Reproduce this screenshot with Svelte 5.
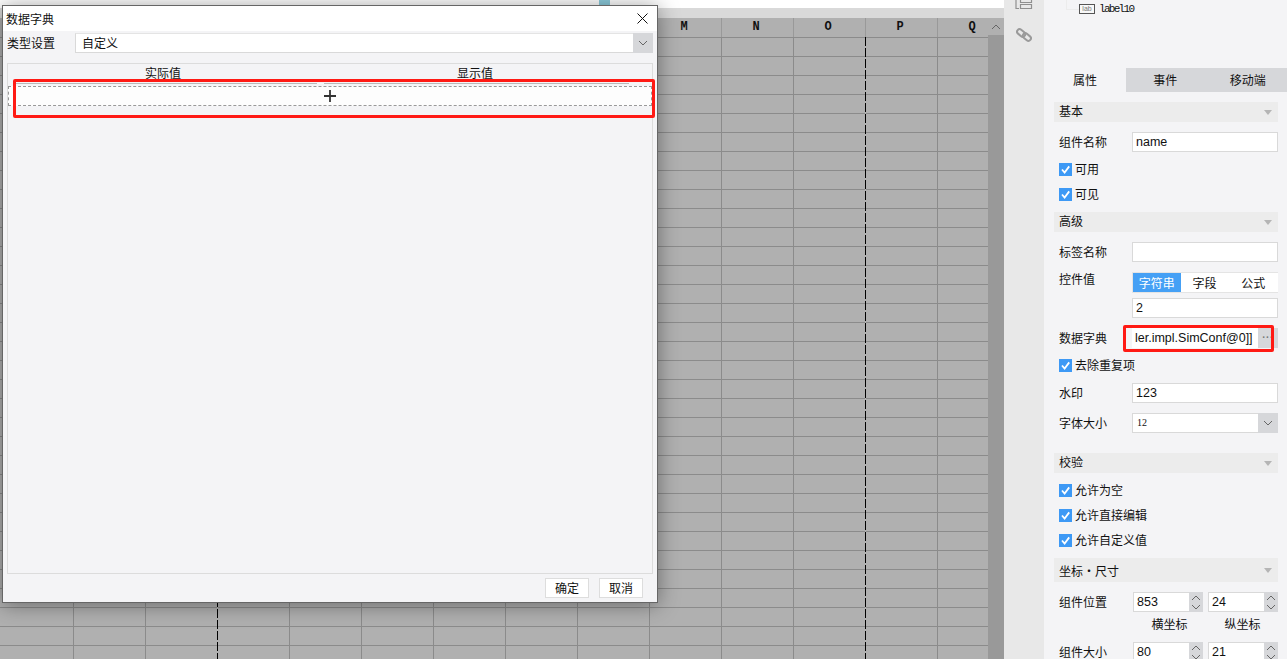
<script>
  const cols = [
    { w: 74 }, { w: 72 }, { w: 72, dash: true }, { w: 72 }, { w: 72 }, { w: 72 }, { w: 72 }, { w: 72 }, { w: 72, label: 'L' },
    { w: 72, label: 'M' }, { w: 72, label: 'N' }, { w: 72, label: 'O', dash: true }, { w: 72, label: 'P' }, { w: 72, label: 'Q' }
  ];
</script>

{#snippet chevron(up = false)}
  <svg class="chev" class:up viewBox="0 0 10 6" width="10" height="6"><path d="M1 1l4 4 4-4" fill="none" stroke="#666" stroke-width="1" /></svg>
{/snippet}

{#snippet sectionHead(title, tall = false)}
  <div class="sec-head" class:tall>
    <span class="sec-title">{title}</span>
    <svg viewBox="0 0 8 5" width="8" height="5"><path d="M0 0h8L4 5z" fill="#b5b5b5" /></svg>
  </div>
{/snippet}

{#snippet check(text)}
  <label class="check">
    <span class="box"><svg viewBox="0 0 13 13" width="13" height="13"><path d="M3 6.5l2.6 3L10.2 3.4" fill="none" stroke="#fff" stroke-width="1.8" /></svg></span>
    <span class="check-text">{text}</span>
  </label>
{/snippet}

{#snippet spin(value)}
  <div class="spin">
    <span class="spin-value">{value}</span>
    <span class="spin-btn">{@render chevron(true)}{@render chevron()}</span>
  </div>
{/snippet}

<div class="screen">
  <main class="work">
    <div class="top-white"><span class="blue-tab"></span></div>
    <div class="top-strip"></div>
    <div class="sheet-wrap">
      <div class="sheet">
        <div class="sheet-head">
          {#each cols as c}
            <div class="head-cell" style="width:{c.w}px">{c.label ?? ''}</div>
          {/each}
        </div>
        <div class="sheet-body">
          {#each cols as c}
            <div class="col" class:dash={c.dash} style="width:{c.w}px"></div>
          {/each}
        </div>
      </div>
      <div class="scrollbar">
        <div class="scroll-up">{@render chevron(true)}</div>
      </div>
    </div>
  </main>

  <nav class="strip">
    <svg class="list-icon" viewBox="0 0 18 10" width="18" height="10"><path d="M1 0v8.5h3M5.5 0v2.5h11V0M5.5 4.5h11v4h-11z" fill="none" stroke="#8f8f8f" stroke-width="1.2" /></svg>
    <svg class="link-icon" viewBox="0 0 16 16" width="16" height="16"><g fill="none" stroke="#9a9a9a" stroke-width="2"><rect x="0.6" y="3.4" width="9" height="5" rx="2.5" transform="rotate(40 5 6)" /><rect x="6.4" y="7.6" width="9" height="5" rx="2.5" transform="rotate(40 11 10)" /></g></svg>
  </nav>

  <aside class="panel">
    <div class="tree">
      <span class="tree-line"></span>
      <span class="lab-icon">lab</span>
      <span class="tree-text">label10</span>
    </div>
    <div class="tabs">
      <span class="tab on">属性</span>
      <span class="tab">事件</span>
      <span class="tab last">移动端</span>
    </div>
    <div class="form">
      <div class="g10">{@render sectionHead('基本')}</div>
      <div class="row g10"><span class="lbl">组件名称</span><span class="field latin">name</span></div>
      <div class="g5">{@render check('可用')}{@render check('可见')}</div>

      <div class="g5">{@render sectionHead('高级')}</div>
      <div class="row g10"><span class="lbl">标签名称</span><span class="field"></span></div>
      <div class="row seg-row g10">
        <span class="lbl seg-lbl">控件值</span>
        <div class="seg"><span class="seg-item on">字符串</span><span class="seg-item">字段</span><span class="seg-item">公式</span></div>
      </div>
      <div class="row g5"><span class="lbl"></span><span class="field latin">2</span></div>
      <div class="row g10">
        <span class="lbl">数据字典</span>
        <div class="combo">
          <span class="combo-text latin clip">ler.impl.SimConf@0]]</span>
          <span class="combo-btn dots">···</span>
        </div>
      </div>
      <div class="g5">{@render check('去除重复项')}</div>
      <div class="row g5"><span class="lbl">水印</span><span class="field latin">123</span></div>
      <div class="row g10">
        <span class="lbl">字体大小</span>
        <div class="combo"><span class="combo-text small">12</span><span class="combo-btn">{@render chevron()}</span></div>
      </div>

      <div class="g20">{@render sectionHead('校验')}</div>
      <div class="g5">{@render check('允许为空')}{@render check('允许直接编辑')}{@render check('允许自定义值')}</div>

      <div class="g5">{@render sectionHead('坐标・尺寸', true)}</div>
      <div class="row g10"><span class="lbl">组件位置</span>{@render spin('853')}{@render spin('24')}</div>
      <div class="row caption"><span class="lbl"></span><span class="cap">横坐标</span><span class="cap">纵坐标</span></div>
      <div class="row g6"><span class="lbl">组件大小</span>{@render spin('80')}{@render spin('21')}</div>
    </div>
  </aside>

  <div class="dialog">
    <header class="dlg-title">
      <span>数据字典</span>
      <svg viewBox="0 0 11 11" width="11" height="11"><path d="M0.5 0.5l10 10M10.5 0.5l-10 10" stroke="#111" stroke-width="1" fill="none" /></svg>
    </header>
    <div class="dlg-type">
      <span class="dlg-lbl">类型设置</span>
      <div class="dlg-combo"><span>自定义</span><span class="dlg-arrow">{@render chevron()}</span></div>
    </div>
    <section class="dict">
      <div class="dict-head"><span>实际值</span><span>显示值</span></div>
      <div class="dict-lines"><i></i><i></i></div>
      <div class="dict-add">
        <svg viewBox="0 0 12 12" width="12" height="12"><path d="M6 0v12M0 6h12" stroke="#333" stroke-width="1.8" /></svg>
      </div>
    </section>
    <footer class="dlg-foot"><span class="btn">确定</span><span class="btn">取消</span></footer>
  </div>

  <div class="mark mark-a"></div>
  <div class="mark mark-b"></div>
</div>

<style>
  :global(body) { margin: 0; background: #fff; }
  .screen {
    position: relative;
    display: flex;
    width: 1287px;
    height: 659px;
    overflow: hidden;
    font: 12px/1 "Noto Sans CJK SC", sans-serif;
    color: #111;
  }
  .latin { font-family: "Liberation Sans", "Noto Sans CJK SC", sans-serif; font-size: 12.5px; }

  .work { width: 1004px; display: flex; flex-direction: column; flex: none; }
  .top-white { height: 8px; background: #fff; position: relative; }
  .blue-tab { position: absolute; left: 599px; top: 0; width: 11px; height: 8px; background: #8ccbdc; }
  .top-strip { height: 10px; background: #d9d9d9; }
  .sheet-wrap { flex: 1; display: flex; min-height: 0; }
  .sheet { flex: 1; min-width: 0; display: flex; flex-direction: column; overflow: hidden; background: #b0b0b0; }
  .sheet-head { display: flex; height: 19px; flex: none; }
  .head-cell {
    flex: none;
    box-sizing: border-box;
    border-right: 1px solid #999;
    text-align: center;
    font: bold 12px/19px "Liberation Mono", monospace;
    color: #111;
    padding-right: 3px;
  }
  .sheet-body {
    flex: 1;
    display: flex;
    background: repeating-linear-gradient(to bottom, #8b8b8b 0 1px, transparent 1px 19px);
  }
  .col { flex: none; box-sizing: border-box; border-right: 1px solid #8b8b8b; position: relative; }
  .col.dash { border-right-color: transparent; }
  .col.dash::after {
    content: "";
    position: absolute;
    top: 0; bottom: 0; right: -1px;
    width: 1px;
    background: repeating-linear-gradient(to bottom, #000 0 9px, #b0b0b0 9px 11px);
  }
  .scrollbar { width: 16px; flex: none; background: #999; }
  .scroll-up { height: 17px; background: #b0b0b0; display: flex; align-items: center; justify-content: center; }

  .chev { display: block; }
  .chev.up { transform: scaleY(-1); }

  .strip { width: 40px; flex: none; background: #e8e8e8; position: relative; }
  .list-icon { position: absolute; left: 11px; top: 0; }
  .link-icon { position: absolute; left: 12px; top: 27px; }

  .panel { flex: 1; min-width: 0; background: #f4f4f6; }
  .tree { height: 68px; position: relative; box-sizing: border-box; }
  .tree-line { position: absolute; left: 22px; top: -1px; width: 12px; height: 10px; border-left: 1px solid #ececec; border-bottom: 1px solid #ececec; }
  .lab-icon {
    position: absolute; left: 35px; top: 4px; width: 16px; height: 10px; box-sizing: border-box;
    border: 1px solid #555; font: 7px/8px "Liberation Sans", sans-serif; color: #777; text-align: center; background: #f8f8f8;
  }
  .tree-text { position: absolute; left: 55px; top: 4px; font: 11px/11px "Liberation Mono", monospace; letter-spacing: -1.7px; }

  .tabs { display: flex; height: 24px; background: #d6d7da; }
  .tab { flex: 1; text-align: center; line-height: 24px; }
  .tab.on { background: #f4f4f6; flex: none; width: 82px; }
  .tab.last { padding-left: 4px; }

  .form { padding: 0 9px 0 10px; }
  .g5 { margin-top: 5px; } .g6 { margin-top: 6px; } .g10 { margin-top: 10px; } .g20 { margin-top: 20px; }

  .sec-head { height: 20px; display: flex; align-items: center; justify-content: space-between; padding: 0 6px 0 5px; background: #ececec; }
  .sec-title { margin-top: -2px; }
  .sec-head.tall { height: 24px; }
  .sec-head.tall .sec-title { margin-top: 2px; }
  .row { display: flex; align-items: center; height: 20px; }
  .lbl { width: 78px; padding-left: 5px; box-sizing: border-box; flex: none; }
  .field {
    flex: 1; height: 20px; box-sizing: border-box; border: 1px solid #d9d9d9; background: #fff;
    padding: 0 3px; line-height: 18px;
  }
  .check { display: flex; align-items: center; gap: 3px; height: 25px; padding-left: 5px; }
  .check-text { margin-top: -2px; }
  .box { width: 13px; height: 13px; background: #3d99f5; flex: none; }
  .box svg { display: block; }

  .seg-row { height: 21px; align-items: flex-start; }
  .seg-lbl { line-height: 14px; }
  .seg { flex: 1; height: 21px; box-sizing: border-box; display: flex; background: #fff; border: 1px solid #e4e4e4; border-right: 0; }
  .seg-item { flex: 1; text-align: center; line-height: 19px; padding-right: 1px; }
  .seg-item.on { background: #45a0f5; color: #fff; padding-right: 0; }

  .combo { flex: 1; height: 20px; display: flex; min-width: 0; box-sizing: border-box; }
  .combo-text { flex: 1; min-width: 0; border: 1px solid #d9d9d9; border-right: 0; background: #fff; box-sizing: border-box; line-height: 18px; padding-left: 4px; }
  .clip { overflow: hidden; white-space: nowrap; background: #fff; border-color: #fff; padding-left: 2px; }
  .small { font: 10px/18px "Liberation Serif", serif; }
  .combo-btn { width: 20px; background: #d6d7da; display: flex; align-items: center; justify-content: center; flex: none; }
  .dots { font: bold 10px/20px "Liberation Sans", sans-serif; color: #777; letter-spacing: 0.5px; }

  .spin { display: flex; width: 70px; height: 20px; box-sizing: border-box; margin-right: 5px; }
  .lbl + .spin { margin-left: 1px; }
  .spin:last-child { margin-right: 0; }
  .spin-value { flex: 1; border: 1px solid #d9d9d9; border-right: 0; background: #fff; font: 12.5px/18px "Liberation Sans", sans-serif; padding-left: 3px; }
  .spin-btn { width: 14px; background: #d6d7da; display: flex; flex-direction: column; align-items: center; justify-content: center; gap: 3px; flex: none; }
  .caption { height: 24px; }
  .cap { width: 75px; text-align: center; padding-left: 2px; box-sizing: border-box; }

  .dialog {
    position: absolute;
    left: 2px; top: 5px;
    width: 656px; height: 598px;
    box-sizing: border-box;
    border: 1px solid #666;
    background: #f4f4f6;
    box-shadow: 0 2px 20px rgba(0, 0, 0, 0.4);
    display: flex;
    flex-direction: column;
  }
  .dlg-title { height: 25px; flex: none; background: #fff; display: flex; align-items: center; justify-content: space-between; padding: 0 9px 0 3px; }
  .dlg-type { display: flex; align-items: center; height: 20px; margin-top: 2px; padding: 0 4px 0 3px; flex: none; }
  .dlg-lbl { width: 69px; flex: none; padding-left: 1px; box-sizing: border-box; }
  .dlg-combo {
    flex: 1; height: 20px; box-sizing: border-box; background: #fff; border: 1px solid #d9d9d9; border-right: 0; border-top: 1px solid #e4e4e4;
    display: flex; align-items: center; justify-content: space-between; padding-left: 6px;
  }
  .dlg-arrow { width: 20px; height: 20px; background: #d6d7da; display: flex; align-items: center; justify-content: center; margin-top: -1px; }
  .dict { margin: 10px 4px 0; flex: 1; min-height: 0; border: 1px solid #dcdcdc; box-sizing: border-box; }
  .dict-head { display: grid; grid-template-columns: 310px 314px; height: 19px; padding-top: 3px; box-sizing: border-box; }
  .dict-head span { text-align: center; }
  .dict-lines { display: grid; grid-template-columns: 302px 305px; column-gap: 7px; height: 1px; padding-left: 7px; }
  .dict-lines i { background: #b9b9b9; }
  .dict-add {
    margin-top: 2px; height: 20px; box-sizing: border-box;
    border: 1px dashed #999; background: #fdfdfd;
    display: flex; align-items: center; justify-content: center;
  }
  .dlg-foot { height: 28px; flex: none; display: flex; justify-content: flex-end; align-items: flex-start; gap: 10px; padding: 4px 14px 0 0; box-sizing: border-box; }
  .btn { width: 44px; height: 20px; box-sizing: border-box; border: 1px solid #ddd; background: #fff; text-align: center; line-height: 18px; }

  .mark { position: absolute; box-sizing: border-box; border: 3px solid #ff1a14; border-radius: 2px; pointer-events: none; }
  .mark-a { left: 13px; top: 79px; width: 642px; height: 39px; }
  .mark-b { left: 1123px; top: 325px; width: 151px; height: 27px; }
</style>
